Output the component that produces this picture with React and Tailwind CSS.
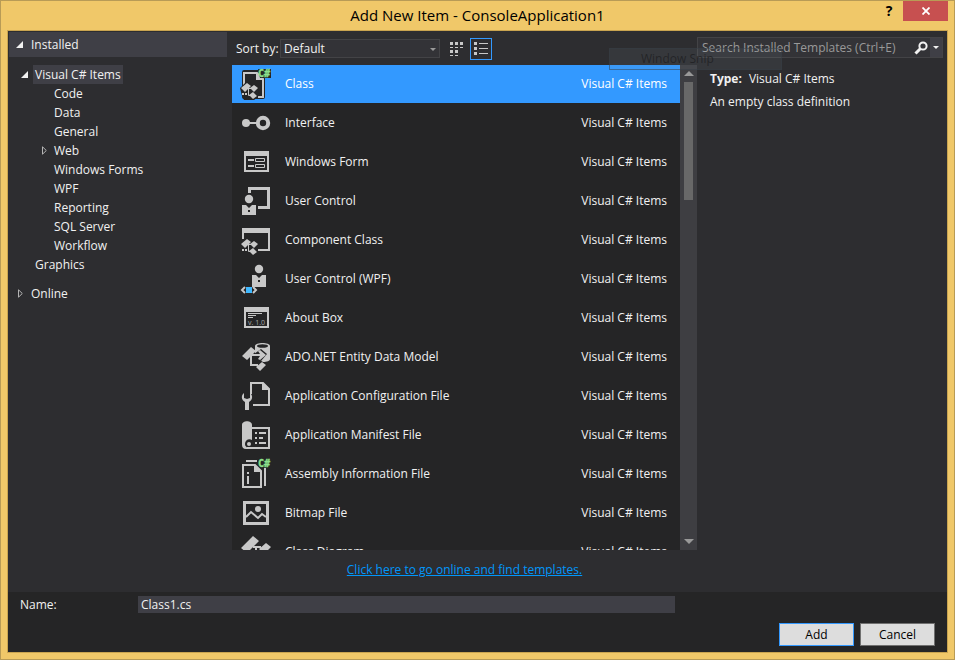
import { useState } from "react";

const categories = [
  { name: "Code" },
  { name: "Data" },
  { name: "General" },
  { name: "Web", expandable: true },
  { name: "Windows Forms" },
  { name: "WPF" },
  { name: "Reporting" },
  { name: "SQL Server" },
  { name: "Workflow" },
];

const templates = [
  { name: "Class", Icon: ClassIcon },
  { name: "Interface", Icon: InterfaceIcon },
  { name: "Windows Form", Icon: FormIcon },
  { name: "User Control", Icon: UserControlIcon },
  { name: "Component Class", Icon: ComponentIcon },
  { name: "User Control (WPF)", Icon: WpfControlIcon },
  { name: "About Box", Icon: AboutIcon },
  { name: "ADO.NET Entity Data Model", Icon: EntityIcon },
  { name: "Application Configuration File", Icon: ConfigIcon },
  { name: "Application Manifest File", Icon: ManifestIcon },
  { name: "Assembly Information File", Icon: AssemblyIcon },
  { name: "Bitmap File", Icon: BitmapIcon },
  { name: "Class Diagram", Icon: DiagramIcon },
];

function Svg({ children }) {
  return (
    <svg
      viewBox="0 0 32 32"
      className="h-8 w-8 shrink-0"
      fill="#c8c8c8"
      aria-hidden="true"
    >
      {children}
    </svg>
  );
}

function CSharp({ y }) {
  return (
    <text
      x="18"
      y={y}
      fill="#8ce08c"
      stroke="#8ce08c"
      strokeWidth="0.400"
      fontFamily="DejaVu Sans Mono, monospace"
      fontSize="10"
      fontWeight="bold"
    >
      C#
    </text>
  );
}

// Three linked blocks, shared by the class and component icons
function Blocks() {
  return (
    <>
      <path d="M1 20l6-5 4 3-6 6zM10 20l4-3 4 3-4 4zM9 27l4-3 4 4-4 3z" />
      <path d="M7 20.500h4M8.500 21v6.500h3" fill="none" stroke="#c8c8c8" strokeWidth="1" />
      <path d="M2 25h2v2H2zM5 25h2v2H5z" />
    </>
  );
}

function ClassIcon() {
  return (
    <Svg>
      <path
        d="M3 2h16v-1h11a1 1 0 0 1 1 1v7a1 1 0 0 1-1 1h-5v19a2 2 0 0 1-2 2H4a2 2 0 0 1-2-2v-6l-1-2 1-2V4a2 2 0 0 1 2-2z"
        fill="#252526"
      />
      <path d="M4 18V5h13l6 6v18h-5" fill="none" stroke="#c8c8c8" strokeWidth="2" />
      <path d="M16 5l8 7h-8z" />
      <path d="M0 20l7-7 5 3h6l1 6-1 7-4 3H4l-2-4z" fill="#252526" />
      <Blocks />
      <path d="M18 1h13v9H20z" fill="#252526" />
      <CSharp y="9" />
    </Svg>
  );
}

function InterfaceIcon() {
  return (
    <Svg>
      <circle cx="6" cy="16" r="4" />
      <path d="M8 15h9v2H8z" />
      <circle cx="23" cy="16" r="5.2" fill="none" stroke="#c8c8c8" strokeWidth="4" />
    </Svg>
  );
}

function FormIcon() {
  return (
    <Svg>
      <path d="M4 5h25v21H4zM6 10v14h21V10z" fillRule="evenodd" />
      <path d="M8 13h6v2H8zM8 19h6v2H8z" />
      <path
        d="M15.500 12.500h9v3h-9zM15.500 18.500h9v3h-9z"
        fill="none"
        stroke="#c8c8c8"
      />
    </Svg>
  );
}

function UserControlIcon() {
  return (
    <Svg>
      <path d="M8 8V2h22v22H18v-3h9V5H11v3z" />
      <circle cx="9" cy="14" r="4.200" />
      <path d="M2 20h4l3 3 3-3h4v10H2zM8 25v2h2v-2z" fillRule="evenodd" />
    </Svg>
  );
}

function ComponentIcon() {
  return (
    <Svg>
      <path d="M2 15V4h28v23H18v-2h10V9H4v6z" />
      <Blocks />
    </Svg>
  );
}

function WpfControlIcon() {
  return (
    <Svg>
      <circle cx="19" cy="6" r="4.200" />
      <path d="M12 12h4l3 3 3-3h4v12H12zM18 17v2h2v-2z" fillRule="evenodd" />
      <path d="M6 24h6v6H6z" fill="#3fb8ff" />
      <path d="M5 24l-3 3 3 3M13 24l3 3-3 3" fill="none" stroke="#c8c8c8" strokeWidth="2" />
    </Svg>
  );
}

function AboutIcon() {
  return (
    <Svg>
      <path d="M4 5h25v21H4zM6 10v14h21V10z" fillRule="evenodd" />
      <path d="M8 11h14v1H8zM8 13h8v1H8zM8 15h5v1H8z" />
      <text
        x="8"
        y="23"
        fill="#a8a8a8"
        fontFamily="Open Sans, sans-serif"
        fontSize="7"
      >
        v. 1.0
      </text>
    </Svg>
  );
}

function EntityIcon() {
  return (
    <Svg>
      <path d="M15 5c0-4 15-4 15 0v13c0 2-3 3-7 3l-8-5z" />
      <ellipse cx="22.500" cy="5" rx="5.500" ry="1.800" fill="#252526" />
      <path d="M14 13l7-5 6 5-6 7-7-3z" fill="#252526" />
      <path d="M2 15l9-9 5 4-9 9zM15 13h5l-2-3 2-1 6 5-6 5-2-1 2-3h-5zM16 26l6-5 4 3-6 6z" />
      <path d="M11 14v10h7M10 14h6" fill="none" stroke="#c8c8c8" strokeWidth="2" />
    </Svg>
  );
}

function ConfigIcon() {
  return (
    <Svg>
      <path d="M11 14V3h12l6 6v16H13" fill="none" stroke="#c8c8c8" strokeWidth="2" />
      <path d="M22 2l8 8h-8z" />
      <path d="M4 13v5l3 1 3-1v-5c3 2 3 7-1 9v8H5v-8c-4-2-4-7-1-9z" />
    </Svg>
  );
}

function ManifestIcon() {
  return (
    <Svg>
      <path d="M2 6c0-5 10-5 10 0v15c-3-2-7 0-7 4 0 3 3 4 5 4v1H6c-3 0-4-2-4-4z" />
      <circle cx="9" cy="25" r="2" />
      <path d="M12 9h17v20H7" fill="none" stroke="#c8c8c8" strokeWidth="2" />
      <path d="M15 13h2v2h-2zM15 18h2v2h-2zM15 23h2v2h-2zM19 13h7v2h-7zM19 18h4v2h-4zM19 23h7v2h-7z" />
    </Svg>
  );
}

function AssemblyIcon() {
  return (
    <Svg>
      <path d="M6 2h11v2H6zM24 10h2v18h-2z" />
      <path d="M3 7h12l6 6v16H3z" fill="none" stroke="#c8c8c8" strokeWidth="2" />
      <path d="M14 6l8 8h-8z" />
      <path d="M7 14h2v2H7zM7 18h2v8H7z" />
      <CSharp y="9" />
    </Svg>
  );
}

function BitmapIcon() {
  return (
    <Svg>
      <path d="M3 4h26v24H3zM6 7v18h20V7z" fillRule="evenodd" />
      <path d="M6 20l5-5 7 6 4-4 4 3" fill="none" stroke="#c8c8c8" strokeWidth="2" />
      <circle cx="18" cy="12" r="3" />
    </Svg>
  );
}

function DiagramIcon() {
  return (
    <Svg>
      <path d="M1 12L13 0l6 5L7 17zM19 13l7-6 5 4-7 7z" />
      <path d="M13 11h8M16 11v12h6" fill="none" stroke="#c8c8c8" strokeWidth="2" />
      <path d="M19 24l6-5 5 4-6 6z" />
    </Svg>
  );
}

function OpenArrow() {
  return (
    <svg viewBox="0 0 7 7" className="h-[7px] w-[7px] shrink-0" fill="#f1f1f1" aria-hidden="true">
      <path d="M7 0v7H0z" />
    </svg>
  );
}

function ClosedArrow() {
  return (
    <svg viewBox="0 0 6 9" className="h-[9px] w-[6px] shrink-0" fill="none" stroke="#b4b4b4" aria-hidden="true">
      <path d="M1.500 0.800v7.400L5.300 4.500z" />
    </svg>
  );
}

function Sidebar() {
  return (
    <nav className="ml-px w-[218px] shrink-0" aria-label="Template categories">
      <button className="flex h-[25px] w-full items-center gap-2 bg-[#3f3f46] pl-[7px] text-left">
        <OpenArrow />
        Installed
      </button>
      <div className="mt-2">
        <button className="flex h-[19px] items-center pl-3">
          <OpenArrow />
          <span className="ml-[5px] bg-[#3f3f46] px-[2px] leading-[19px]">Visual C# Items</span>
        </button>
        <ul>
          {categories.map((c) => (
            <li key={c.name} className="flex h-[19px] items-center pl-8">
              <span className="flex w-[13px] shrink-0">{c.expandable && <ClosedArrow />}</span>
              <button>{c.name}</button>
            </li>
          ))}
        </ul>
        <button className="flex h-[19px] items-center pl-[26px]">Graphics</button>
      </div>
      <button className="mt-[10px] flex h-[19px] items-center gap-2 pl-2">
        <ClosedArrow />
        Online
      </button>
    </nav>
  );
}

function Toolbar() {
  return (
    <div className="flex h-[33px] shrink-0 items-center pl-1">
      <label htmlFor="sort" className="w-11 whitespace-nowrap">
        Sort by:
      </label>
      <div className="relative">
        <select
          id="sort"
          className="h-[19px] w-40 appearance-none border border-[#434346] bg-[#333337] pl-[3px] leading-[17px]"
        >
          <option>Default</option>
          <option>Name Ascending</option>
          <option>Name Descending</option>
        </select>
        <svg
          viewBox="0 0 6 3"
          className="pointer-events-none absolute right-1 top-[9px] h-[3px] w-[6px]"
          fill="#999999"
          aria-hidden="true"
        >
          <path d="M0 0h6L3 3z" />
        </svg>
      </div>
      <button aria-label="Small icons" className="ml-[6px] mr-[2px] flex h-[22px] w-[22px] items-center justify-center">
        <svg viewBox="0 0 14 14" className="h-[14px] w-[14px]" fill="#c8c8c8">
          <path d="M0 0h3v3H0zM5 0h3v3H5zM10 0h3v3h-3zM0 5h3v1H0zM5 5h3v1H5zM10 5h3v1h-3zM0 8h3v3H0zM5 8h3v3H5zM0 13h3v1H0zM5 13h3v1H5z" />
        </svg>
      </button>
      <button
        aria-label="Medium icons"
        className="flex h-[22px] w-[22px] items-center justify-center border border-[#3399ff]"
      >
        <svg viewBox="0 0 14 13" className="h-[13px] w-[14px]" fill="#c8c8c8">
          <path d="M0 0h3v3H0zM5 1h9v1H5zM0 5h3v3H0zM5 6h9v1H5zM0 10h3v3H0zM5 11h9v1H5z" />
        </svg>
      </button>
    </div>
  );
}

function ScrollBar() {
  return (
    <div className="flex w-[17px] shrink-0 flex-col items-center bg-[#3e3e42] py-[6px]">
      <svg viewBox="0 0 10 5" className="h-[5px] w-[10px]" fill="#999999" aria-hidden="true">
        <path d="M5 0l5 5H0z" />
      </svg>
      <div className="mt-[6px] h-[118px] w-[9px] bg-[#686868]" />
      <svg viewBox="0 0 10 5" className="mt-auto h-[5px] w-[10px]" fill="#999999" aria-hidden="true">
        <path d="M0 0h10L5 5z" />
      </svg>
    </div>
  );
}

function TemplateList({ selected, onSelect }) {
  return (
    <div className="flex min-h-0 flex-1">
      <ul className="flex min-w-0 flex-1 flex-col gap-px overflow-hidden bg-[#252526]">
        {templates.map(({ name, Icon }) => (
          <li key={name} className="shrink-0">
            <button
              onClick={() => onSelect(name)}
              className={`flex h-[38px] w-full items-center gap-[13px] pl-2 pr-[13px] text-left ${
                selected === name ? "bg-[#3399ff] text-white" : ""
              }`}
            >
              <Icon />
              <span className="flex-1">{name}</span>
              <span>Visual C# Items</span>
            </button>
          </li>
        ))}
      </ul>
      <ScrollBar />
    </div>
  );
}

function Details() {
  return (
    <aside className="w-[250px] shrink-0 pr-1 pt-[5px]">
      <div className="flex h-[21px] border border-[#434346] bg-[#333337]">
        <input
          type="search"
          aria-label="Search Installed Templates"
          placeholder="Search Installed Templates (Ctrl+E)"
          className="min-w-0 flex-1 bg-transparent pl-1 outline-none placeholder:text-[#999999]"
        />
        <button aria-label="Search" className="flex w-[18px] shrink-0 items-center justify-center">
          <svg viewBox="0 0 14 14" className="h-[14px] w-[14px]" fill="none" stroke="#f1f1f1" aria-hidden="true">
            <circle cx="9" cy="5" r="3.600" strokeWidth="2" />
            <path d="M6.500 7.500L1.500 12.500" strokeWidth="3" />
          </svg>
        </button>
        <button aria-label="Search options" className="flex w-[12px] shrink-0 items-center justify-center bg-[#3f3f46]">
          <svg viewBox="0 0 6 3" className="h-[3px] w-[6px]" fill="#f1f1f1" aria-hidden="true">
            <path d="M0 0h6L3 3z" />
          </svg>
        </button>
      </div>
      <div className="pl-[13px] pt-3">
        <p className="flex gap-[7px] leading-[18px]">
          <b>Type:</b>
          Visual C# Items
        </p>
        <p className="mt-[5px] leading-[18px]">An empty class definition</p>
      </div>
    </aside>
  );
}

export default function App() {
  const [selected, setSelected] = useState("Class");
  const [fileName, setFileName] = useState("Class1.cs");

  return (
    <div className="flex h-screen flex-col border border-[#b89b56] bg-[#f0c869] px-[6px] pb-[6px] font-['Open_Sans',sans-serif] text-[12px] text-[#f1f1f1]">
      {/* Title bar */}
      <header className="relative flex h-[29px] shrink-0 items-center justify-center text-black">
        <h1 className="text-[15px]">Add New Item - ConsoleApplication1</h1>
        <div className="absolute right-0 top-0 flex">
          <button aria-label="Help" className="h-5 w-7 text-[14px] font-bold leading-[20px]">
            ?
          </button>
          <button aria-label="Close" className="flex h-5 w-[45px] items-center justify-center bg-[#c75050]">
            <svg viewBox="0 0 8 8" className="h-2 w-2" stroke="#ffffff" strokeWidth="1.800" aria-hidden="true">
              <path d="M0.500 0.500l7 7M7.500 0.500l-7 7" />
            </svg>
          </button>
        </div>
      </header>

      <div className="relative flex min-h-0 flex-1 flex-col border border-[#c9a450] bg-[#2d2d30]">
        <main className="flex min-h-0 flex-1 pt-px">
          <Sidebar />
          <section className="ml-[5px] flex min-w-0 flex-1 flex-col">
            <Toolbar />
            <TemplateList selected={selected} onSelect={setSelected} />
            <div className="flex h-[42px] shrink-0 justify-center pt-[11px]">
              <a href="#online" className="leading-[18px] text-[#0097fb] underline">
                Click here to go online and find templates.
              </a>
            </div>
          </section>
          <Details />
        </main>

        {/* Fading menu left over the toolbar */}
        <div className="pointer-events-none absolute right-[165px] top-[17px] flex h-[22px] w-[173px] items-center border border-[#343b44]/50 bg-[#8899aa]/10 pl-[31px] text-[#1b1b1c]/70">
          Window Snip
        </div>

        <footer className="shrink-0 bg-[#252526] pb-[6px] pl-3 pr-3 pt-1">
          <div className="flex items-center pr-[260px]">
            <label htmlFor="name" className="w-[118px] shrink-0 leading-[17px]">
              Name:
            </label>
            <input
              id="name"
              value={fileName}
              onChange={(e) => setFileName(e.target.value)}
              className="h-[17px] min-w-0 flex-1 bg-[#3f3f46] pl-[3px] outline-none"
            />
          </div>
          <div className="mt-[10px] flex justify-end gap-[6px] text-black">
            <button className="h-[23px] w-[75px] border border-[#3399ff] bg-[#dddddd]">Add</button>
            <button className="h-[23px] w-[75px] border border-[#707070] bg-[#dddddd]">Cancel</button>
          </div>
        </footer>
      </div>
    </div>
  );
}
